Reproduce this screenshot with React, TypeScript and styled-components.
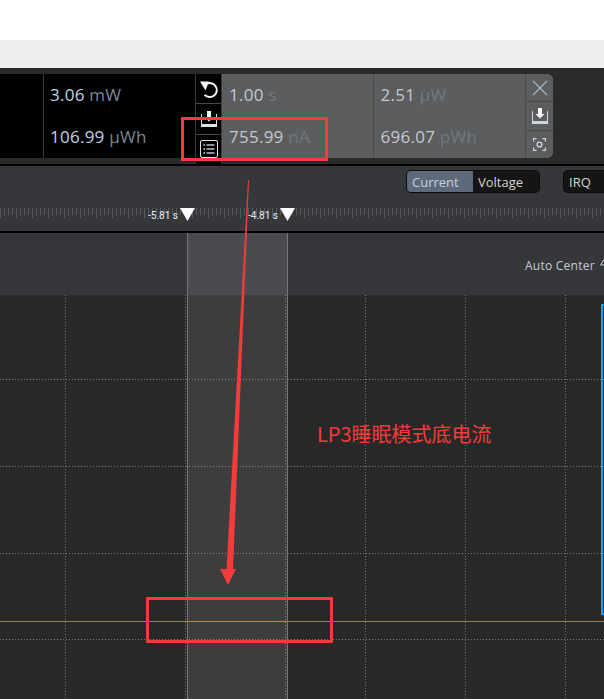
import React from "react";
import styled, { createGlobalStyle } from "styled-components";

const Global = createGlobalStyle`
  html, body { margin: 0; padding: 0; background: #fff; }
  body { font-family: "Open Sans", "Liberation Sans", sans-serif; }
`;

const Page = styled.div`
  position: relative;
  width: 604px;
  height: 699px;
  overflow: hidden;
  display: flex;
  flex-direction: column;
`;
const WhiteBand = styled.div`height: 40px; background: #fff;`;
const GreyBand = styled.div`height: 28px; background: #eeeeee;`;

const StatsBar = styled.div`
  height: 98px;
  box-sizing: border-box;
  padding-top: 6px;
  background: #2a2a2b;
  border-bottom: 2px solid #000;
  display: flex;
`;
const StatGroup = styled.div<{ $dark?: boolean; $width: number }>`
  width: ${(p) => p.$width}px;
  height: 84px;
  display: flex;
  background: ${(p) => (p.$dark ? "#000" : "#5c5d5f")};
  border-radius: ${(p) => (p.$dark ? "0" : "0 6px 6px 0")};
  overflow: hidden;
`;
const StatColumn = styled.div<{ $width: number; $dark?: boolean; $last?: boolean }>`
  width: ${(p) => p.$width}px;
  box-sizing: border-box;
  padding-left: ${(p) => (p.$dark ? 6 : 7)}px;
  display: flex;
  flex-direction: column;
  border-right: ${(p) => (p.$last ? "0" : `1px solid ${p.$dark ? "#3a3a3c" : "#47484a"}`)};
`;
const StatLine = styled.div<{ $dark?: boolean }>`
  height: 42px;
  line-height: 42px;
  font-size: 17px;
  letter-spacing: 0.25px;
  white-space: nowrap;
  color: ${(p) => (p.$dark ? "#c3d3e6" : "#c4c9ce")};
`;
const Unit = styled.span<{ $dark?: boolean }>`
  color: ${(p) => (p.$dark ? "#7a8794" : "#72797e")};
`;
const IconColumn = styled.div<{ $dark?: boolean }>`
  width: 27px;
  display: flex;
  flex-direction: column;
  background: ${(p) => (p.$dark ? "#000" : "#5c5d5f")};
`;
const IconCell = styled.div<{ $dark?: boolean; $flush?: boolean }>`
  flex: 1;
  display: flex;
  align-items: center;
  justify-content: center;
  border-right: ${(p) => (p.$dark ? "1px solid #3a3a3c" : "0")};
  border-left: ${(p) => (p.$flush ? "0" : `1px solid ${p.$dark ? "#3a3a3c" : "#47484a"}`)};
  & + & { border-top: 1px solid ${(p) => (p.$dark ? "#3a3a3c" : "#47484a")}; }
`;

const Toolbar = styled.div`
  height: 67px;
  box-sizing: border-box;
  background: #36373b;
  border-bottom: 2px solid #000;
  position: relative;
  display: flex;
  flex-direction: column;
`;
const ToolbarRow = styled.div`
  height: 27px;
  padding-top: 4px;
  display: flex;
  justify-content: flex-end;
  box-sizing: border-box;
`;
const Segments = styled.div`
  width: 134px;
  height: 23px;
  margin-right: 23px;
  display: flex;
  border: 1px solid #0b0b0b;
  border-radius: 5px;
  overflow: hidden;
  background: #151515;
  box-sizing: border-box;
  font-size: 13px;
`;
const Segment = styled.div<{ $on?: boolean }>`
  width: 66px;
  line-height: 23px;
  padding-left: 5px;
  box-sizing: border-box;
  background: ${(p) => (p.$on ? "#5c6a7c" : "#151515")};
  color: ${(p) => (p.$on ? "#c6d0db" : "#d8d4cf")};
`;
const Select = styled.div`
  width: 41px;
  height: 23px;
  box-sizing: border-box;
  border: 1px solid #0b0b0b;
  border-right: 0;
  border-radius: 5px 0 0 5px;
  background: #151515;
  color: #d8d4cf;
  font-size: 13px;
  line-height: 23px;
  padding-left: 5px;
`;
const Ruler = styled.svg`display: block; margin-top: 15px;`;
const CursorLabel = styled.div<{ $x: number }>`
  position: absolute;
  top: 43px;
  left: ${(p) => p.$x}px;
  font-family: "Roboto", sans-serif;
  font-size: 10px;
  line-height: 14px;
  color: #e8eef5;
`;
const CursorMark = styled.svg<{ $x: number }>`
  position: absolute;
  top: 42px;
  left: ${(p) => p.$x}px;
`;

const Header = styled.div`
  height: 62px;
  background: #36373b;
  display: flex;
  justify-content: flex-end;
  align-items: center;
  font-size: 12px;
  letter-spacing: 0.25px;
  color: #c8ccd2;
  overflow: hidden;
  white-space: nowrap;
`;
const AutoCenter = styled.div`
  width: 79px;
  flex: none;
  display: flex;
  align-items: flex-start;
  justify-content: space-between;
  margin-top: 2px;
`;
const AutoGlyph = styled.svg`flex: none; margin-top: 2px;`;
const Plot = styled.svg`display: block; flex: 1; background: #292829;`;
const Band = styled.div`
  position: absolute;
  left: 187px;
  top: 233px;
  bottom: 0;
  width: 101px;
  box-sizing: border-box;
  background: rgba(255,255,255,0.1);
  border-left: 1px solid #77787b;
  border-right: 1px solid #77787b;
`;
const Overlay = styled.svg`
  position: absolute;
  inset: 0;
  pointer-events: none;
`;
const Note = styled.div`
  position: absolute;
  left: 317px;
  top: 420px;
  font-family: "Noto Sans CJK SC", sans-serif;
  font-size: 20px;
  line-height: 28px;
  color: #f53b3b;
  white-space: nowrap;
`;

const stroke = "#d9e3ee";
const UndoIcon = () => (
  <svg width="20" height="20" viewBox="0 0 20 20" fill="none">
    <path d="M7 5.2 A7 7 0 1 1 5.6 15.8" stroke="#f3f5f7" strokeWidth="2" />
    <path d="M1 2.5 L10 2.5 L6.5 11.5 Z" fill="#f3f5f7" />
  </svg>
);
const SaveIcon = ({ c }: { c: string }) => (
  <svg width="16" height="16" viewBox="0 0 16 16" fill="none">
    <path d="M0.5 3 V15.5 H15.5 V3" stroke={c} strokeWidth="1" />
    <rect x="0" y="13" width="16" height="3" fill={c} />
    <path d="M6 0 H10 V6 H12.5 L8 10.5 L3.5 6 H6 Z" fill="#f3f5f7" />
  </svg>
);
const ListIcon = () => (
  <svg width="18" height="18" viewBox="0 0 18 18" fill="none">
    <rect x="0.5" y="0.5" width="17" height="17" rx="1.5" stroke={stroke} strokeWidth="1" />
    {[5, 9, 13].map((y) => (
      <g key={y}>
        <path d={`M3.5 ${y} H5`} stroke={stroke} strokeWidth="1.3" />
        <path d={`M6.5 ${y} H14.5`} stroke={stroke} strokeWidth="1.3" />
      </g>
    ))}
  </svg>
);
const CloseIcon = () => (
  <svg width="16" height="16" viewBox="0 0 16 16" fill="none">
    <path d="M1 1 L15 15 M15 1 L1 15" stroke="#a9b7c5" strokeWidth="1.2" />
  </svg>
);
const ShotIcon = () => (
  <svg width="13" height="13" viewBox="0 0 13 13" fill="none">
    <path d="M0.6 3.5 V0.6 H3.5 M9.5 0.6 H12.4 V3.5 M12.4 9.5 V12.4 H9.5 M3.5 12.4 H0.6 V9.5" stroke="#d2d6da" strokeWidth="1.2" />
    <circle cx="6.5" cy="6.5" r="2.4" stroke="#d2d6da" strokeWidth="1.4" />
  </svg>
);

const ticks = Array.from({ length: 152 }, (_, i) => i * 4);
const vGrid = [65.5, 185.5, 285.5, 365.5, 465.5, 565.5];
const hGrid = [379.5, 466.5, 553.5, 639.5];

const Triangle = ({ x }: { x: number }) => (
  <CursorMark $x={x} width="16" height="14" viewBox="0 0 16 14">
    <path d="M0 0 H15 L7.5 13 Z" fill="#fff" />
  </CursorMark>
);

export default function App() {
  return (
    <Page>
      <Global />
      <WhiteBand />
      <GreyBand />
      <StatsBar>
        <StatGroup $dark $width={195}>
          <StatColumn $width={44} $dark />
          <StatColumn $width={151} $dark $last>
            <StatLine $dark>3.06 <Unit $dark>mW</Unit></StatLine>
            <StatLine $dark>106.99 <Unit $dark>µWh</Unit></StatLine>
          </StatColumn>
        </StatGroup>
        <IconColumn $dark>
          <IconCell $dark><UndoIcon /></IconCell>
          <IconCell $dark><SaveIcon c={stroke} /></IconCell>
          <IconCell $dark><ListIcon /></IconCell>
        </IconColumn>
        <StatGroup $width={331}>
          <StatColumn $width={152}>
            <StatLine>1.00 <Unit>s</Unit></StatLine>
            <StatLine>755.99 <Unit>nA</Unit></StatLine>
          </StatColumn>
          <StatColumn $width={153}>
            <StatLine>2.51 <Unit>µW</Unit></StatLine>
            <StatLine>696.07 <Unit>pWh</Unit></StatLine>
          </StatColumn>
          <IconColumn>
            <IconCell $flush><CloseIcon /></IconCell>
            <IconCell $flush><SaveIcon c="#d2d6da" /></IconCell>
            <IconCell $flush><ShotIcon /></IconCell>
          </IconColumn>
        </StatGroup>
      </StatsBar>
      <Toolbar>
        <ToolbarRow>
          <Segments>
            <Segment $on>Current</Segment>
            <Segment>Voltage</Segment>
          </Segments>
          <Select>IRQ</Select>
        </ToolbarRow>
        <Ruler width="604" height="10">
          {ticks.map((x, i) => (
            <rect key={x} x={x} y={0} width="1" height={i % 4 === 0 ? 10 : 7} fill="#57585c" />
          ))}
        </Ruler>
        <CursorLabel $x={148}>-5.81 s</CursorLabel>
        <Triangle x={180} />
        <CursorLabel $x={248}>-4.81 s</CursorLabel>
        <Triangle x={280} />
      </Toolbar>
      <Header>
        <AutoCenter>
          <span>Auto Center</span>
          <AutoGlyph width="4" height="8" viewBox="0 0 4 8">
            <path d="M4 0.5 L0.5 6 H4" fill="none" stroke="#c8ccd2" />
          </AutoGlyph>
        </AutoCenter>
      </Header>
      <Plot viewBox="0 295 604 404" preserveAspectRatio="none">
        {vGrid.map((x) => (
          <line key={x} x1={x} x2={x} y1="295" y2="699" stroke="#7a7a7c" strokeDasharray="1 2" />
        ))}
        {hGrid.map((y) => (
          <line key={y} x1="0" x2="604" y1={y} y2={y} stroke="#7a7a7c" strokeDasharray="1 2" />
        ))}
        <line x1="0" x2="604" y1="621.5" y2="621.5" stroke="#12a4f2" />
        <path d="M604 305 H602 V614 H604" fill="none" stroke="#12a4f2" strokeWidth="2" />
      </Plot>
      <Band />
      <Overlay width="604" height="699" viewBox="0 0 604 699">
        <rect x="182.5" y="118.5" width="144" height="41" fill="none" stroke="#f53b3b" strokeWidth="3" />
        <rect x="147.5" y="598.5" width="184" height="43" fill="none" stroke="#f53b3b" strokeWidth="3" />
        <path d="M248 180 L249 180 L233 569 L236 569 L228 585 L220 569 L226.5 569 Z" fill="#f53b3b" />
      </Overlay>
      <Note>LP3睡眠模式底电流</Note>
    </Page>
  );
}
